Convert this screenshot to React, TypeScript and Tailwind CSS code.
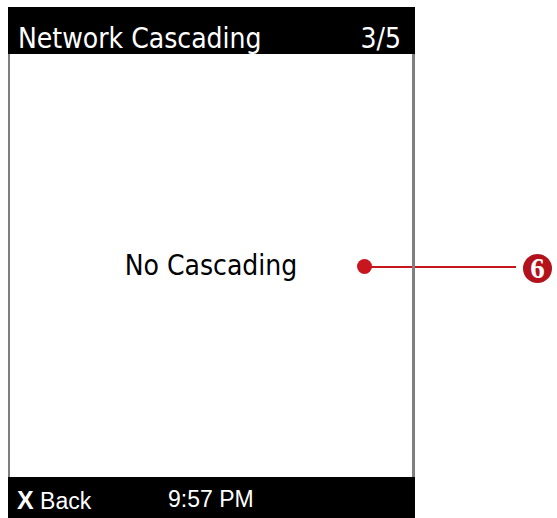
export default function App() {
  return (
    <div className="relative h-[518px] w-[557px] overflow-hidden bg-white">
      <div className="ml-[8px] mt-[7px] flex w-[407px] flex-col">
        <div className="flex h-[47px] items-start justify-between bg-black pl-[10px] pr-[14px] pt-[18px] font-['DejaVu_Sans_Condensed','DejaVu_Sans',sans-serif] text-[28px] leading-none text-white">
          <span>Network Cascading</span>
          <span>3/5</span>
        </div>
        <div className="flex h-[423px] items-center justify-center border-l-2 border-r-[3px] border-[#7f7f7f] bg-white pt-[1px] font-['DejaVu_Sans_Condensed','DejaVu_Sans',sans-serif] text-[28px] leading-none text-black">
          No Cascading
        </div>
        <div className="flex h-[48px] items-start bg-black pl-[9px] pt-[11px] font-['Liberation_Sans',Arial,sans-serif] text-[23px] leading-none text-white">
          <span className="w-[151px]">
            <span className="text-[25px] font-bold">X</span> Back
          </span>
          <span>9:57 PM</span>
        </div>
      </div>

      {/* callout */}
      <div className="absolute left-[365px] top-[266px] h-[2px] w-[151px] bg-[#c8161e]" />
      <div className="absolute left-[357px] top-[259px] h-[15px] w-[15px] rounded-full bg-[#c8161e]" />
      <div className="absolute left-[412px] top-[54px] h-[423px] w-[3px] bg-[#7f7f7f]" />
      <div className="absolute left-[523px] top-[254px] flex h-[29px] w-[29px] items-center justify-center rounded-full bg-[#b3121a] font-['Liberation_Serif',serif] text-[29px] font-bold leading-none text-white">
        6
      </div>
    </div>
  );
}
